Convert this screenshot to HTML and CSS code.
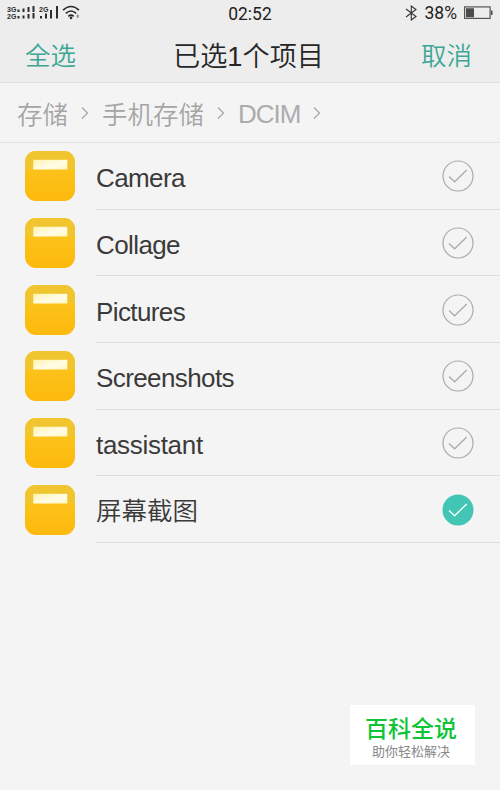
FILE: index.html
```
<!DOCTYPE html>
<html lang="zh-CN">
<head>
<meta charset="utf-8">
<title>已选1个项目</title>
<link rel="stylesheet" href="styles.css">
</head>
<body>
<svg class="defs" aria-hidden="true">
  <defs>
    <linearGradient id="body" x1="0" y1="0" x2="0" y2="1"><stop offset="0" stop-color="#f9c823"/><stop offset="1" stop-color="#feb90c"/></linearGradient>
    <linearGradient id="paper" x1="0" y1="0" x2="1" y2="1"><stop offset="0" stop-color="#fff3b0"/><stop offset=".6" stop-color="#fffde8"/><stop offset="1" stop-color="#fff6c0"/></linearGradient>
  </defs>
  <symbol id="folder" viewBox="0 0 50 50">
    <rect width="50" height="50" rx="11" fill="url(#body)"/>
    <path d="M0 18V11A11 11 0 0 1 11 0H39A11 11 0 0 1 50 11V18Z" fill="#f1c52f"/>
    <rect x="8.300" y="8.800" width="34" height="9.700" fill="url(#paper)"/>
  </symbol>
  <symbol id="check" viewBox="0 0 32 32">
    <circle cx="16" cy="16" r="15"/>
    <path d="M7 16.500 12.600 21.800 24.700 10"/>
  </symbol>
  <symbol id="checked" viewBox="0 0 32 32">
    <circle cx="16" cy="16" r="15.500" fill="#42c5b5" stroke="none"/>
    <path d="M7 16.500 12.600 21.800 24.700 10"/>
  </symbol>
  <symbol id="chevron" viewBox="0 0 8 14"><path d="M1 1.500 6.500 7 1 12.500" fill="none" stroke="#a8a8a8" stroke-width="1.300"/></symbol>
</svg>
<div class="top">
  <div class="status">
    <div class="signals">
      <div class="nets"><span>3G</span><span>2G</span></div>
      <svg width="64" height="20" viewBox="0 4 64 20" fill="#2c2c2c">
        <path d="M-.5 9.500h2V12h-2zM4.500 8.500h2V12h-2zM9.500 7h2v5h-2zM14.500 6h2v6h-2zM-.5 16h2v2.500h-2zM4.500 15.500h2v3h-2zM9.500 14h2v4.500h-2zM14.500 13h2v5.500h-2zM22 16h2v2.500h-2zM27 13.500h2v5h-2zM32 10h2v8.500h-2zM38 6h2v12.500h-2z"/>
        <text class="net-label" x="21" y="11.500">2G</text>
        <g fill="none" stroke="#2c2c2c" stroke-width="1.600"><path d="M45 10.200Q53 2.800 61 10.200M47.800 13.400Q53 8.600 58.200 13.400M50.300 16.300Q53 14 55.700 16.300"/></g>
        <circle cx="53" cy="17.900" r="1.300"/><rect x="58.700" y="14.500" width="2" height="3.500" rx="1" fill="#888"/>
      </svg>
    </div>
    <div class="time">02:52</div>
    <div class="power">
      <svg width="12" height="16" viewBox="0 0 12 16"><path d="M1 4 11 11.500 6.300 15V1L11 4.500 1 12" fill="none" stroke="#333" stroke-width="1.100"/></svg>
      <span class="percent">38%</span>
      <svg width="29" height="14" viewBox="0 0 29 14"><rect x=".6" y=".9" width="25.500" height="11.500" fill="none" stroke="#555" stroke-width="1.200"/><path d="M2 2.200h8v9H2zM27 4.500h1.500v4.500H27z" fill="#4b4b4b"/></svg>
    </div>
  </div>
  <div class="titlebar">
    <span class="action">全选</span>
    <h1 class="title">已选1个项目</h1>
    <span class="action">取消</span>
  </div>
</div>
<nav class="crumbs">
  <span>存储</span><svg class="chev"><use href="#chevron"/></svg>
  <span>手机存储</span><svg class="chev"><use href="#chevron"/></svg>
  <span class="latin">DCIM</span><svg class="chev"><use href="#chevron"/></svg>
</nav>
<main class="list">
  <div class="row"><svg class="folder"><use href="#folder"/></svg><div class="cell"><span class="name">Camera</span><svg class="check"><use href="#check"/></svg></div></div>
  <div class="row"><svg class="folder"><use href="#folder"/></svg><div class="cell"><span class="name">Collage</span><svg class="check"><use href="#check"/></svg></div></div>
  <div class="row"><svg class="folder"><use href="#folder"/></svg><div class="cell"><span class="name">Pictures</span><svg class="check"><use href="#check"/></svg></div></div>
  <div class="row"><svg class="folder"><use href="#folder"/></svg><div class="cell"><span class="name">Screenshots</span><svg class="check"><use href="#check"/></svg></div></div>
  <div class="row"><svg class="folder"><use href="#folder"/></svg><div class="cell"><span class="name wide">tassistant</span><svg class="check"><use href="#check"/></svg></div></div>
  <div class="row"><svg class="folder"><use href="#folder"/></svg><div class="cell"><span class="name han">屏幕截图</span><svg class="check selected"><use href="#checked"/></svg></div></div>
</main>
<aside class="badge"><strong>百科全说</strong><span>助你轻松解决</span></aside>
</body>
</html>
```
FILE: styles.css
```
* { box-sizing: border-box; }
body {
  margin: 0;
  width: 500px;
  height: 790px;
  overflow: hidden;
  position: relative;
  background: #f4f4f4;
  color: #3a3a3a;
  font-family: Roboto, "Noto Sans CJK SC", sans-serif;
  font-weight: 350;
}
svg { display: block; flex: none; }
.defs { position: absolute; width: 0; height: 0; }
.top { height: 83px; background: #ededed; border-bottom: 1px solid #e0e0e0; }
.status {
  height: 28px;
  display: grid;
  grid-template-columns: 1fr auto 1fr;
  align-items: center;
  padding: 0 7px;
}
.signals { display: flex; align-items: center; height: 26px; }
.signals svg { overflow: visible; }
.nets {
  display: flex;
  flex-direction: column;
  width: 11px;
  margin-top: -1px;
  font: 700 7px/6.5px "Liberation Sans", sans-serif;
  color: #2c2c2c;
}
.net-label { font: 700 7px "Liberation Sans", sans-serif; }
.time { font-size: 17.5px; font-weight: 400; line-height: 26px; margin-top: -1px; color: #222; }
.power { display: flex; align-items: center; justify-content: flex-end; height: 26px; margin-top: -2px; }
.percent { font-size: 17.5px; font-weight: 400; margin: 0 7px 0 8px; color: #222; }
.titlebar {
  height: 50px;
  display: flex;
  align-items: center;
  justify-content: space-between;
  padding: 0 28px 0 25px;
}
.action { font-size: 25.5px; color: #3da796; }
.title { margin: 0; padding-top: 2px; font-family: "Liberation Sans", "Noto Sans CJK SC", sans-serif; font-size: 27.2px; font-weight: 350; color: #262626; }
.crumbs {
  height: 60px;
  display: flex;
  align-items: center;
  padding-left: 17px;
  border-bottom: 1px solid #e2e2e2;
  font-size: 25.5px;
  color: #a5a5a5;
}
.latin { font-family: "Liberation Sans", sans-serif; font-size: 26px; letter-spacing: -1px; padding-top: 3px; color: #acacac; }
.chev { width: 8px; height: 14px; margin: 0 13px; }
.list { display: flex; flex-direction: column; }
.row { height: 66.7px; display: flex; align-items: center; padding-left: 25px; }
.folder { width: 50px; height: 50px; margin-right: 21px; }
.cell {
  flex: 1;
  height: 100%;
  display: flex;
  align-items: center;
  justify-content: space-between;
  padding-right: 26px;
  border-bottom: 1px solid #dedede;
}
.name {
  font-family: "Liberation Sans", "Noto Sans CJK SC", sans-serif;
  font-size: 26px;
  letter-spacing: -.6px;
  line-height: 36px;
  padding-top: 5px;
  white-space: nowrap;
}
.wide { letter-spacing: -.3px; }
.han { font-size: 25.5px; letter-spacing: 0; padding-top: 3px; }
.check { width: 32px; height: 32px; margin-top: 1px; fill: none; stroke: #aaa; stroke-width: 1.2; }
.selected { margin-top: 2px; stroke: #e9fffa; stroke-width: 1.5; }
.badge {
  position: absolute;
  left: 350px;
  top: 705px;
  width: 125px;
  height: 60px;
  background: #fff;
  display: flex;
  flex-direction: column;
  align-items: center;
  padding: 11px 3px 0 0;
}
.badge strong { font-size: 23px; line-height: 28px; font-weight: 500; color: #0fc537; }
.badge span { font-size: 13px; line-height: 15px; font-weight: 400; color: #888; }
```
